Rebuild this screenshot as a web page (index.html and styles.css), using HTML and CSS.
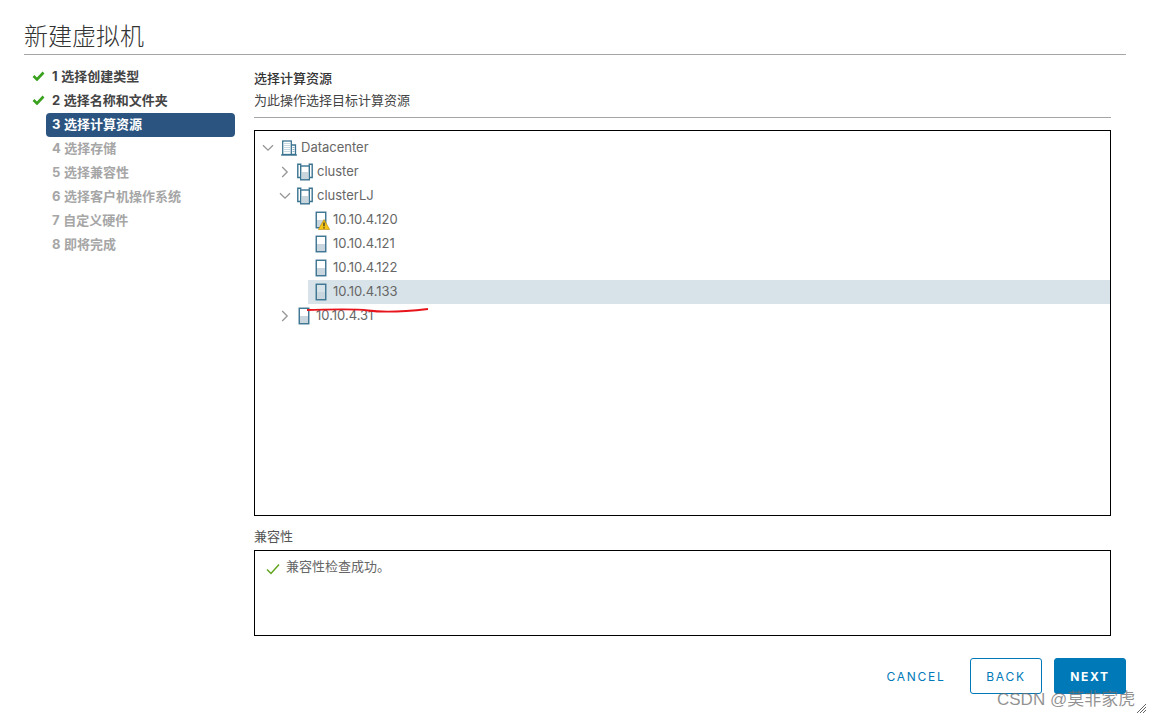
FILE: index.html
```html
<!DOCTYPE html>
<html lang="zh">
<head>
<meta charset="utf-8">
<title>新建虚拟机</title>
<link rel="stylesheet" href="styles.css">
</head>
<body>
<svg class="defs" width="0" height="0" aria-hidden="true">
  <symbol id="i-host" viewBox="0 0 12 18">
    <rect x="1.5" y="9" width="9" height="7.500" fill="#c9d6dd"/>
    <rect x="1.250" y="1.250" width="9.500" height="15.500" fill="none" stroke="#3a7390" stroke-width="1.4"/>
  </symbol>
  <symbol id="i-cluster" viewBox="0 0 16 18">
    <path d="M3.700 2.800V1.200H.8V14.500H3.700M12.300 2.800V1.200H15.200V14.500H12.300" fill="none" stroke="#3a7390" stroke-width="1.400"/>
    <rect x="5" y="9" width="6" height="7" fill="#c9d6dd"/>
    <rect x="3.700" y="3" width="8.600" height="13.800" fill="none" stroke="#3a7390" stroke-width="1.400"/>
  </symbol>
  <symbol id="i-dc" viewBox="0 0 16 16">
    <rect x="1.700" y="1" width="8.600" height="13.500" fill="#fff" stroke="#3a7390" stroke-width="1.300"/>
    <path d="M10.300 5H14.500V14.500H10.300" fill="none" stroke="#3a7390" stroke-width="1.300"/>
    <path d="M0 15H16" stroke="#3a7390" stroke-width="1.300"/>
    <path d="M3.500 3.500h5M3.500 5.500h5M3.500 7.500h5M3.500 9.500h5M3.500 11.500h5" stroke="#8fb3c4" stroke-width="1" stroke-dasharray="1 1"/>
    <path d="M11.500 7.500h2M11.500 9.500h2M11.500 11.500h2" stroke="#8fb3c4" stroke-width="1"/>
  </symbol>
  <symbol id="i-down" viewBox="0 0 12 8"><path d="M1 1.200L6 6.200L11 1.200" fill="none" stroke="#969696" stroke-width="1.300"/></symbol>
  <symbol id="i-right" viewBox="0 0 8 12"><path d="M1.200 1L6.200 6L1.200 11" fill="none" stroke="#969696" stroke-width="1.300"/></symbol>
  <symbol id="i-step" viewBox="0 0 12 10"><path d="M1 5L4.500 8.500L11 1.500" fill="none" stroke="#3aa11f" stroke-width="2.600"/></symbol>
</svg>

<div class="dialog">
  <h1 class="title">新建虚拟机</h1>
  <div class="body">
    <nav class="steps">
      <div class="step done"><svg class="step-check"><use href="#i-step"/></svg><span class="step-label">1 选择创建类型</span></div>
      <div class="step done"><svg class="step-check"><use href="#i-step"/></svg><span class="step-label">2 选择名称和文件夹</span></div>
      <div class="step active"><span class="step-label">3 选择计算资源</span></div>
      <div class="step"><span class="step-label">4 选择存储</span></div>
      <div class="step"><span class="step-label">5 选择兼容性</span></div>
      <div class="step"><span class="step-label">6 选择客户机操作系统</span></div>
      <div class="step"><span class="step-label">7 自定义硬件</span></div>
      <div class="step"><span class="step-label">8 即将完成</span></div>
    </nav>
    <main class="main">
      <header class="head">
        <div class="head-title">选择计算资源</div>
        <div class="head-sub">为此操作选择目标计算资源</div>
      </header>
      <div class="tree">
        <div class="row lv0"><svg class="chev-d"><use href="#i-down"/></svg><svg class="ic-dc"><use href="#i-dc"/></svg><span>Datacenter</span></div>
        <div class="row lv1"><svg class="chev-r"><use href="#i-right"/></svg><svg class="ic-cluster"><use href="#i-cluster"/></svg><span>cluster</span></div>
        <div class="row lv1b"><svg class="chev-d"><use href="#i-down"/></svg><svg class="ic-cluster"><use href="#i-cluster"/></svg><span>clusterLJ</span></div>
        <div class="row lv2"><span class="warn-wrap"><svg class="ic-host"><use href="#i-host"/></svg><svg class="ic-warn" viewBox="0 0 12 11"><path d="M6 .5L11.700 10.500H.3Z" fill="#f5c518" stroke="#b8860b" stroke-width=".6"/><path d="M6 3.500V7.300M6 8.200V9.500" stroke="#222" stroke-width="1.200"/></svg></span><span>10.10.4.120</span></div>
        <div class="row lv2"><svg class="ic-host"><use href="#i-host"/></svg><span>10.10.4.121</span></div>
        <div class="row lv2"><svg class="ic-host"><use href="#i-host"/></svg><span>10.10.4.122</span></div>
        <div class="row lv2 selected"><svg class="ic-host"><use href="#i-host"/></svg><span>10.10.4.133</span></div>
        <div class="row lv1c"><svg class="chev-r"><use href="#i-right"/></svg><svg class="ic-host"><use href="#i-host"/></svg><span>10.10.4.31</span></div>
      </div>
      <div class="compat-label">兼容性</div>
      <div class="compat">
        <svg class="compat-check" viewBox="0 0 14 12"><path d="M1 6.500L5 10.500L13 1.500" fill="none" stroke="#62a420" stroke-width="1.500"/></svg>
        <span>兼容性检查成功。</span>
      </div>
    </main>
  </div>
  <footer class="footer">
    <button class="btn link">CANCEL</button>
    <button class="btn outline">BACK</button>
    <button class="btn primary">NEXT</button>
  </footer>
</div>

<svg class="scribble" viewBox="0 0 124 10" aria-hidden="true"><path d="M1 4C30 3.500 48 2.500 62 4.500C80 7 100 5.500 122 3" fill="none" stroke="#e8141c" stroke-width="1.800"/></svg>
<div class="watermark">CSDN @莫非家虎</div>
<svg class="grip" viewBox="0 0 10 10" aria-hidden="true"><path d="M0 9L9 0M3 9L9 3M6 9L9 6" stroke="#666" stroke-width="1"/></svg>
</body>
</html>
```
FILE: styles.css
```css
* { box-sizing: border-box; }
html, body { margin: 0; height: 100%; background: #fff; }
body {
  position: relative;
  overflow: hidden;
  font-family: Inter, "Noto Sans CJK SC", sans-serif;
  font-size: 13px;
  color: #666;
}
.defs { position: absolute; }
.dialog { display: flex; flex-direction: column; height: 718px; padding: 0 23px 0 24px; }
.title {
  margin: 0;
  height: 55px;
  padding-top: 19px;
  font-size: 24px;
  line-height: 36px;
  font-weight: 300;
  color: #333;
  border-bottom: 1px solid #a6a6a6;
}
.body { display: flex; padding-top: 9px; }
.steps { width: 211px; flex: none; margin-right: 19px; }
.step { display: flex; align-items: flex-start; height: 24px; padding-left: 22px; position: relative; font-weight: 700; color: #a6a6a6; word-spacing: .5px; }
.step-label { display: block; width: 189px; height: 24px; line-height: 24px; padding-left: 6px; border-radius: 4px; }
.step.done { color: #444; }
.step-check { position: absolute; left: 8px; top: 7px; width: 13px; height: 10px; }
.step.active .step-label { background: #2b5580; color: #fff; margin-top: 1px; line-height: 22px; }
.main { width: 857px; flex: none; }
.head { height: 54px; border-bottom: 1px solid #a6a6a6; padding-top: 3px; }
.head-title { height: 22px; line-height: 22px; font-weight: 500; color: #333; }
.head-sub { height: 22px; line-height: 22px; color: #444; }
.tree { height: 386px; margin-top: 12px; border: 1px solid #000; padding-top: 5px; }
.row { display: flex; align-items: center; height: 24px; white-space: nowrap; }
.row > span:last-child { margin-bottom: 2px; }
.lv0 { padding-left: 7px; }
.lv1 { padding-left: 26px; }
.lv1b { padding-left: 24px; }
.lv1c { padding-left: 26px; }
.lv2 { margin-left: 53px; padding-left: 7px; }
.selected { background: #d8e3e9; }
.chev-d { width: 12px; height: 8px; flex: none; margin-right: 7px; }
.lv1b .chev-d { margin-right: 6px; }
.chev-r { width: 8px; height: 12px; flex: none; margin-right: 8px; }
.ic-dc { width: 16px; height: 16px; flex: none; margin-right: 4px; }
.ic-cluster { width: 16px; height: 18px; flex: none; margin-right: 4px; }
.ic-host { width: 12px; height: 18px; flex: none; margin-right: 6px; }
.lv1c .chev-r { margin-right: 9px; }
.warn-wrap { position: relative; display: flex; flex: none; }
.ic-warn { position: absolute; left: 3px; top: 8px; width: 12px; height: 11px; }
.compat-label { height: 34px; line-height: 40px; color: #555; }
.compat { display: flex; height: 86px; border: 1px solid #000; padding: 4px 11px; line-height: 22px; color: #666; }
.compat-check { width: 14px; height: 12px; flex: none; margin: 8px 6px 0 0; }
.footer { display: flex; justify-content: flex-end; align-items: center; gap: 12px; margin-top: 22px; }
.btn {
  height: 36px;
  width: 72px;
  border-radius: 3px;
  border: 1px solid #0079b8;
  font: 600 12px/36px Inter, sans-serif;
  letter-spacing: 1.7px;
  padding: 0;
}
.link { border-color: transparent; background: none; color: #0079b8; font-weight: 400; width: 82px; margin-right: 1px; }
.outline { background: #fff; color: #0079b8; font-weight: 400; }
.primary { background: #0079b8; color: #fff; font-weight: 700; }
.scribble { position: absolute; left: 306px; top: 306px; width: 124px; height: 10px; }
.watermark {
  position: absolute;
  left: 997px;
  top: 688px;
  font-family: "Liberation Sans", "Noto Sans CJK SC", sans-serif;
  font-size: 17px;
  line-height: 24px;
  color: rgba(110, 110, 110, .75);
  white-space: nowrap;
}
.grip { position: absolute; left: 1137px; top: 704px; width: 10px; height: 10px; }
```
